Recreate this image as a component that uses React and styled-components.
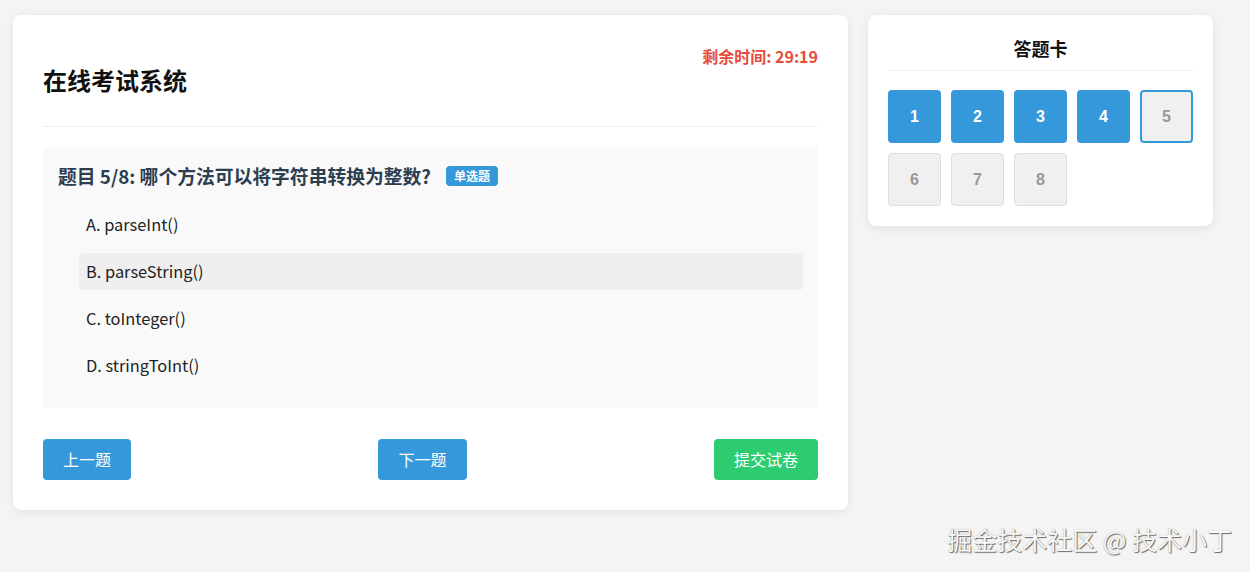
import React from "react";
import styled, { createGlobalStyle, css } from "styled-components";

const Global = createGlobalStyle`
  html, body { margin: 0; padding: 0; }
  body {
    background: #f4f4f4;
    font-family: "Noto Sans CJK SC", "Noto Sans", sans-serif;
    color: #333;
  }
`;

const Page = styled.div`
  position: relative;
  width: 1250px;
  height: 572px;
  box-sizing: border-box;
  padding: 15px 0 0 13px;
  display: flex;
  align-items: flex-start;
  gap: 20px;
`;

const Card = styled.div`
  background: #fff;
  border-radius: 8px;
  box-shadow: 0 2px 10px rgba(0, 0, 0, 0.08);
  box-sizing: border-box;
`;

const MainCard = styled(Card)`
  width: 835px;
  padding: 30px;
`;

const SideCard = styled(Card)`
  width: 345px;
  padding: 20px;
`;

const Header = styled.div`
  display: flex;
  justify-content: space-between;
  align-items: flex-start;
  border-bottom: 1px solid #eee;
  padding-bottom: 31px;
`;

const Title = styled.h1`
  margin: 20px 0 0;
  font-size: 24px;
  line-height: 30px;
  font-weight: 700;
  color: #111;
`;

const Timer = styled.div`
  font-size: 16px;
  line-height: 22px;
  font-weight: 700;
  color: #e74c3c;
`;

const QuestionBox = styled.div`
  margin-top: 20px;
  background: #f9f9f9;
  padding: 15px 15px 24px;
`;

const QuestionTitle = styled.h2`
  margin: 0 0 17px;
  font-size: 18.8px;
  line-height: 27px;
  font-weight: 700;
  color: #2c3e50;
  display: flex;
  align-items: center;
`;

const Badge = styled.span`
  margin-left: 15px;
  background: #3498db;
  color: #fff;
  font-size: 12px;
  line-height: 16px;
  font-weight: 700;
  padding: 2px 8px;
  border-radius: 4px;
`;

const OptionList = styled.div`
  padding-left: 21px;
  display: flex;
  flex-direction: column;
  gap: 10px;
`;

const Option = styled.div`
  padding: 9px 7px;
  font-size: 16.4px;
  line-height: 19px;
  color: #222;
  border-radius: 4px;
  cursor: pointer;
  ${(p) =>
    p.$hover &&
    css`
      background: #efefef;
    `}
`;

const Actions = styled.div`
  margin-top: 31px;
  display: flex;
  justify-content: space-between;
`;

const Button = styled.button`
  border: none;
  border-radius: 4px;
  padding: 10px 20px;
  font-family: "Noto Sans CJK SC", sans-serif;
  font-size: 16px;
  line-height: 21px;
  color: #fff;
  background: ${(p) => (p.$green ? "#2ecc71" : "#3498db")};
  cursor: pointer;
`;

const SideTitle = styled.h3`
  margin: 0;
  text-align: center;
  font-size: 18px;
  line-height: 26px;
  font-weight: 700;
  color: #111;
  padding-bottom: 9px;
  border-bottom: 1px solid #eee;
`;

const Grid = styled.div`
  margin-top: 19px;
  display: grid;
  grid-template-columns: repeat(5, 53px);
  grid-auto-rows: 53px;
  gap: 10px;
`;

const Cell = styled.div`
  box-sizing: border-box;
  border-radius: 4px;
  display: flex;
  align-items: center;
  justify-content: center;
  font-family: "Liberation Sans", Arial, sans-serif;
  font-weight: 700;
  font-size: 16px;
  ${(p) =>
    p.$state === "done"
      ? css`
          background: #3498db;
          color: #fff;
        `
      : p.$state === "current"
      ? css`
          background: #f0f0f0;
          color: #999;
          border: 2px solid #3498db;
        `
      : css`
          background: #f0f0f0;
          color: #999;
          border: 1px solid #ddd;
        `}
`;

const Watermark = styled.div`
  position: absolute;
  right: 18px;
  bottom: 19px;
  font-size: 25px;
  line-height: 28px;
  color: #fafafa;
  text-shadow: 1px 1px 1px rgba(0, 0, 0, 0.55), 0 0 1px rgba(0, 0, 0, 0.4);
`;

const options = ["A. parseInt()", "B. parseString()", "C. toInteger()", "D. stringToInt()"];

export default function App() {
  const cells = [1, 2, 3, 4, 5, 6, 7, 8];
  return (
    <>
      <Global />
      <Page>
        <MainCard>
          <Header>
            <Title>在线考试系统</Title>
            <Timer>剩余时间: 29:19</Timer>
          </Header>
          <QuestionBox>
            <QuestionTitle>
              题目 5/8: 哪个方法可以将字符串转换为整数?
              <Badge>单选题</Badge>
            </QuestionTitle>
            <OptionList>
              {options.map((o, i) => (
                <Option key={o} $hover={i === 1}>
                  {o}
                </Option>
              ))}
            </OptionList>
          </QuestionBox>
          <Actions>
            <Button>上一题</Button>
            <Button>下一题</Button>
            <Button $green>提交试卷</Button>
          </Actions>
        </MainCard>
        <SideCard>
          <SideTitle>答题卡</SideTitle>
          <Grid>
            {cells.map((n) => (
              <Cell key={n} $state={n < 5 ? "done" : n === 5 ? "current" : "todo"}>
                {n}
              </Cell>
            ))}
          </Grid>
        </SideCard>
        <Watermark>掘金技术社区 @ 技术小丁</Watermark>
      </Page>
    </>
  );
}
